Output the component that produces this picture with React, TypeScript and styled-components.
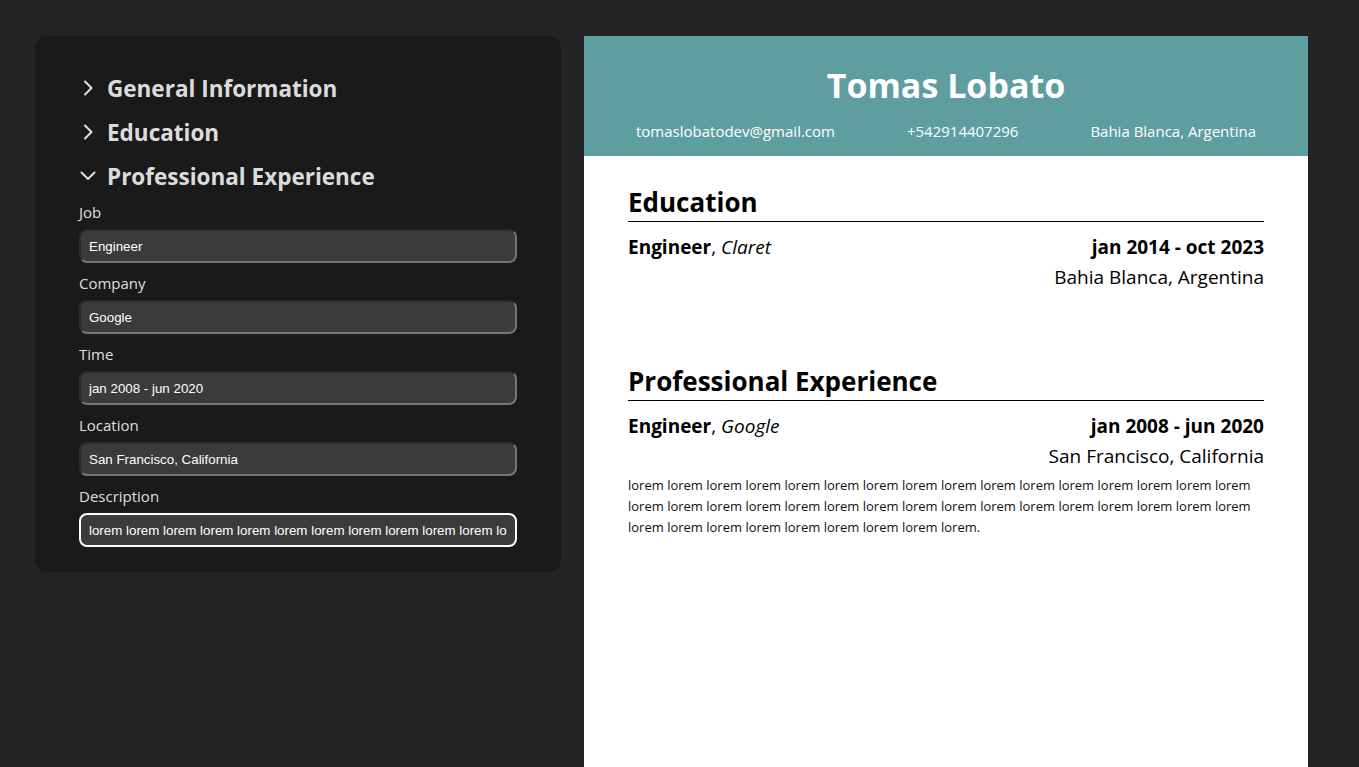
import React from 'react';
import styled, { createGlobalStyle } from 'styled-components';

const GlobalStyle = createGlobalStyle`
	:root {
		color-scheme: dark;
	}

	body {
		margin: 0;
		background-color: #242424;
		color: rgba(255, 255, 255, 0.87);
		font-family: 'Open Sans', 'Noto Sans', sans-serif;
	}

	* {
		box-sizing: border-box;
	}
`;

const Page = styled.div`
	display: flex;
	align-items: flex-start;
	gap: 23px;
	padding: 36px 36px 36px 35px;
`;

const EditorPanel = styled.aside`
	width: 526px;
	flex-shrink: 0;
	display: flex;
	flex-direction: column;
	padding: 30px 44px 25px 44px;
	background-color: #1a1a1a;
	border-radius: 12px;
`;

const SectionToggle = styled.button`
	display: flex;
	align-items: center;
	gap: 10px;
	height: 44px;
	padding: 0;
	border: none;
	background: none;
	color: rgba(255, 255, 255, 0.87);
	font-family: inherit;
	font-size: 22.5px;
	font-weight: 700;
	cursor: pointer;
	text-align: left;
`;

const ChevronBox = styled.span`
	width: 18px;
	display: flex;
	justify-content: center;
	align-items: center;
`;

const Fields = styled.div`
	display: flex;
	flex-direction: column;
	padding-top: 4px;
`;

const Field = styled.label`
	display: flex;
	flex-direction: column;
	gap: 6px;
	margin-bottom: 10px;

	&:last-child {
		margin-bottom: 0;
	}
`;

const FieldLabel = styled.span`
	font-size: 15px;
	line-height: 21px;
	color: rgba(255, 255, 255, 0.87);
`;

const TextInput = styled.input<{ $focused?: boolean }>`
	width: 100%;
	height: 34px;
	padding: 0 8px;
	border-radius: 8px;
	border: 2px solid;
	border-color: ${({ $focused }) =>
		$focused ? '#ffffff' : '#2c2c2c #767676 #767676 #2c2c2c'};
	background-color: #3b3b3b;
	color: #ffffff;
	font-family: 'Liberation Sans', Arial, sans-serif;
	font-size: 13.33px;
	outline: none;
`;

const Resume = styled.article`
	width: 724px;
	min-height: 1024px;
	flex-shrink: 0;
	background-color: #ffffff;
	color: #000000;
`;

const ResumeHeader = styled.header`
	display: flex;
	flex-direction: column;
	align-items: center;
	gap: 10px;
	height: 120px;
	padding: 25px 52px 0;
	background-color: #5f9ea0;
	color: #ffffff;
`;

const Name = styled.h1`
	margin: 0;
	font-size: 34px;
	line-height: 49px;
	font-weight: 700;
`;

const ContactRow = styled.div`
	width: 100%;
	display: flex;
	justify-content: space-between;
	font-size: 15px;
	line-height: 22px;
`;

const ResumeBody = styled.div`
	display: flex;
	flex-direction: column;
	padding: 0 44px;
`;

const Section = styled.section`
	margin-top: 27px;
`;

const SectionTitle = styled.h2`
	margin: 0;
	font-size: 26px;
	line-height: 38px;
	font-weight: 700;
	border-bottom: 1px solid #000000;
`;

const Entry = styled.div`
	margin: 10px 0 43px;
`;

const EntryRow = styled.div`
	display: flex;
	justify-content: space-between;
	align-items: flex-start;
	font-size: 19px;
	line-height: 30px;
`;

const EntryMeta = styled.div`
	display: flex;
	flex-direction: column;
	align-items: flex-end;
	text-align: right;
`;

const Description = styled.p`
	margin: 4px 0 0;
	font-size: 13px;
	line-height: 21px;
	color: #111111;
`;

function Chevron({ open }: { open: boolean }) {
	return (
		<ChevronBox>
			{open ? (
				<svg width="16" height="10" viewBox="0 0 16 10" fill="none">
					<polyline
						points="1.5,1.5 8,8 14.5,1.5"
						stroke="rgba(255,255,255,0.87)"
						strokeWidth="2"
						strokeLinecap="round"
						strokeLinejoin="round"
					/>
				</svg>
			) : (
				<svg width="10" height="16" viewBox="0 0 10 16" fill="none">
					<polyline
						points="2,1.5 8.5,8 2,14.5"
						stroke="rgba(255,255,255,0.87)"
						strokeWidth="2"
						strokeLinecap="round"
						strokeLinejoin="round"
					/>
				</svg>
			)}
		</ChevronBox>
	);
}

const lorem = Array(41).fill('lorem').join(' ') + '.';

const experienceFields = [
	{ label: 'Job', value: 'Engineer' },
	{ label: 'Company', value: 'Google' },
	{ label: 'Time', value: 'jan 2008 - jun 2020' },
	{ label: 'Location', value: 'San Francisco, California' },
	{ label: 'Description', value: lorem, focused: true },
];

export default function App(): React.ReactElement {
	return (
		<>
			<GlobalStyle />
			<Page>
				<EditorPanel>
					<SectionToggle>
						<Chevron open={false} />
						General Information
					</SectionToggle>
					<SectionToggle>
						<Chevron open={false} />
						Education
					</SectionToggle>
					<SectionToggle>
						<Chevron open />
						Professional Experience
					</SectionToggle>
					<Fields>
						{experienceFields.map((field) => (
							<Field key={field.label}>
								<FieldLabel>{field.label}</FieldLabel>
								<TextInput
									type="text"
									defaultValue={field.value}
									$focused={field.focused}
								/>
							</Field>
						))}
					</Fields>
				</EditorPanel>

				<Resume>
					<ResumeHeader>
						<Name>Tomas Lobato</Name>
						<ContactRow>
							<span>tomaslobatodev@gmail.com</span>
							<span>+542914407296</span>
							<span>Bahia Blanca, Argentina</span>
						</ContactRow>
					</ResumeHeader>
					<ResumeBody>
						<Section>
							<SectionTitle>Education</SectionTitle>
							<Entry>
								<EntryRow>
									<span>
										<strong>Engineer</strong>, <em>Claret</em>
									</span>
									<EntryMeta>
										<strong>jan 2014 - oct 2023</strong>
										<span>Bahia Blanca, Argentina</span>
									</EntryMeta>
								</EntryRow>
							</Entry>
						</Section>
						<Section>
							<SectionTitle>Professional Experience</SectionTitle>
							<Entry>
								<EntryRow>
									<span>
										<strong>Engineer</strong>, <em>Google</em>
									</span>
									<EntryMeta>
										<strong>jan 2008 - jun 2020</strong>
										<span>San Francisco, California</span>
									</EntryMeta>
								</EntryRow>
								<Description>{lorem}</Description>
							</Entry>
						</Section>
					</ResumeBody>
				</Resume>
			</Page>
		</>
	);
}
